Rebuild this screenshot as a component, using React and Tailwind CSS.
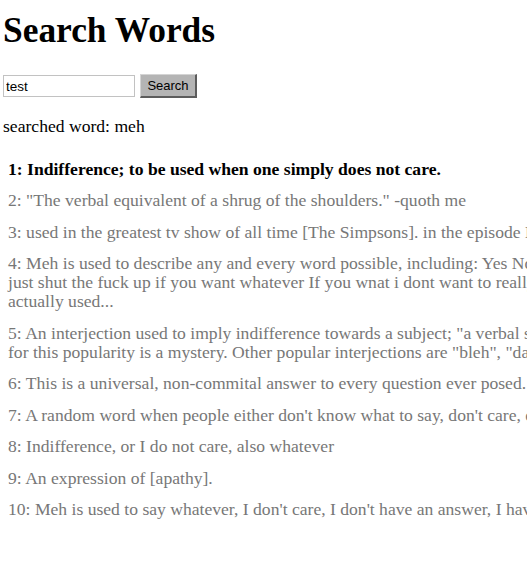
import { useState } from "react";

const definitions = [
  ["Indifference; to be used when one simply does not care."],
  ["\"The verbal equivalent of a shrug of the shoulders.\" -quoth me"],
  ["used in the greatest tv show of all time [The Simpsons]. in the episode Lisa's Rival, Bart says \"meh\""],
  [
    "Meh is used to describe any and every word possible, including: Yes No Maybe So Whatever I dont know I dont care",
    "just shut the fuck up if you want whatever If you wnat i dont want to really answer that question. this is how it is",
    "actually used...",
  ],
  [
    "An interjection used to imply indifference towards a subject; \"a verbal shrug\". It has become increasingly popular and the reason",
    "for this popularity is a mystery. Other popular interjections are \"bleh\", \"dang\" and \"eh\".",
  ],
  ["This is a universal, non-commital answer to every question ever posed."],
  ["A random word when people either don't know what to say, don't care, or just can't be bothered to answer."],
  ["Indifference, or I do not care, also whatever"],
  ["An expression of [apathy]."],
  ["Meh is used to say whatever, I don't care, I don't have an answer, I have nothing to say about it."],
];

export default function App() {
  const [query, setQuery] = useState("test");
  const [word] = useState("meh");

  return (
    <div className="w-[527px] h-[570px] overflow-hidden bg-white pl-[3px] font-['Liberation_Serif',serif] text-black">
      <h1 className="mt-[10px] text-[35.4px] leading-[40px] font-bold whitespace-nowrap">Search Words</h1>

      {/* search form */}
      <div className="mt-[24px] flex items-center h-[24px] gap-[5px]">
        <input
          value={query}
          onChange={(e) => setQuery(e.target.value)}
          className="w-[132px] h-[22px] border border-[#c2c2c2] bg-white px-[2px] font-['Liberation_Sans',sans-serif] text-[13.5px] text-black outline-none"
        />
        <button className="h-[24px] w-[57px] bg-[#b4b4b4] border-t border-l border-t-[#d4d4d4] border-l-[#d4d4d4] border-r-2 border-b-2 border-r-[#5c5c5c] border-b-[#5c5c5c] font-['Liberation_Sans',sans-serif] text-[13px] text-black leading-none">
          Search
        </button>
      </div>

      <p className="mt-[18px] text-[17.6px] leading-[20px] whitespace-nowrap">searched word: {word}</p>

      {/* definitions */}
      <div className="mt-[23.6px] pl-[5px] flex flex-col gap-[12.5px] text-[17.6px] leading-[19px]">
        {definitions.map((lines, i) => (
          <div
            key={i}
            className={i === 0 ? "font-bold text-black whitespace-nowrap" : "text-[#777777] whitespace-nowrap"}
          >
            {lines.map((line, j) => (
              <div key={j}>
                {j === 0 ? `${i + 1}: ` : ""}
                {line}
              </div>
            ))}
          </div>
        ))}
      </div>
    </div>
  );
}
